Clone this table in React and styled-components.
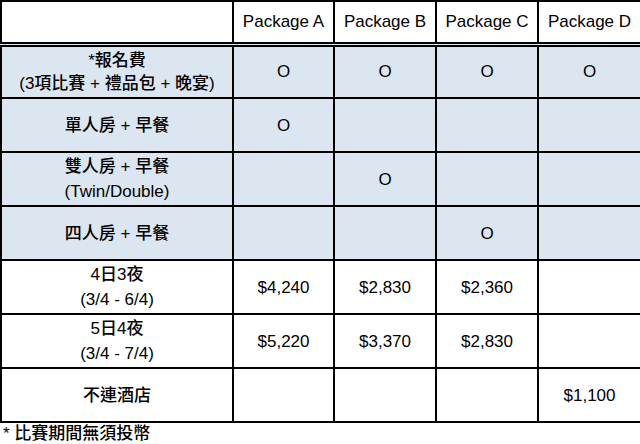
import React from "react";
import styled, { createGlobalStyle } from "styled-components";

const GlobalStyle = createGlobalStyle`
  html, body { margin: 0; padding: 0; background: #fff; }
  body {
    font-family: "Liberation Sans", Arial, "Noto Sans CJK TC", sans-serif;
    color: #000;
  }
`;

const Page = styled.div`
  width: 640px;
  display: flex;
  flex-direction: column;
`;

const PriceTable = styled.table`
  width: 640px;
  table-layout: fixed;
  border-collapse: collapse;
  border: 2px solid #000;
  font-size: 17px;
`;

const HeadRow = styled.tr`
  height: 43px;
`;

const HeadCell = styled.th`
  font-weight: normal;
  padding: 0;
  text-align: center;
  vertical-align: middle;
  background: #fff;
  border: 2px solid #000;
  border-bottom: 5px double #000;
`;

const BodyRow = styled.tr`
  height: 54px;
  background: ${(p) => (p.$shaded ? "#dce6f1" : "#fff")};
`;

const Cell = styled.td`
  padding: 0;
  text-align: center;
  vertical-align: middle;
  border: 2px solid #000;
  line-height: 25px;
`;

const LabelCell = styled(Cell)`
  font-weight: 500;
`;

const Line = styled.div`
  white-space: nowrap;
  line-height: ${(p) => (p.$tight ? "23px" : "25px")};
`;

const Note = styled.div`
  font-size: 17px;
  font-weight: 500;
  line-height: 20px;
  padding: 1px 0 0 3px;
  white-space: nowrap;
`;

const packages = ["Package A", "Package B", "Package C", "Package D"];

const rows = [
  { shaded: true, tight: true, label: ["*報名費", "(3項比賽 + 禮品包 + 晚宴)"], values: ["O", "O", "O", "O"] },
  { shaded: true, label: ["單人房 + 早餐"], values: ["O", "", "", ""] },
  { shaded: true, label: ["雙人房 + 早餐", "(Twin/Double)"], values: ["", "O", "", ""] },
  { shaded: true, label: ["四人房 + 早餐"], values: ["", "", "O", ""] },
  { label: ["4日3夜", "(3/4 - 6/4)"], values: ["$4,240", "$2,830", "$2,360", ""] },
  { label: ["5日4夜", "(3/4 - 7/4)"], values: ["$5,220", "$3,370", "$2,830", ""] },
  { label: ["不連酒店"], values: ["", "", "", "$1,100"] },
];

export default function App() {
  return (
    <Page>
      <GlobalStyle />
      <PriceTable>
        <colgroup>
          <col style={{ width: 232 }} />
          <col style={{ width: 101 }} />
          <col style={{ width: 102 }} />
          <col style={{ width: 102 }} />
          <col style={{ width: 103 }} />
        </colgroup>
        <thead>
          <HeadRow>
            <HeadCell />
            {packages.map((p) => (
              <HeadCell key={p}>{p}</HeadCell>
            ))}
          </HeadRow>
        </thead>
        <tbody>
          {rows.map((r, i) => (
            <BodyRow key={i} $shaded={r.shaded}>
              <LabelCell>
                {r.label.map((l) => (
                  <Line key={l} $tight={r.tight}>{l}</Line>
                ))}
              </LabelCell>
              {r.values.map((v, j) => (
                <Cell key={j}>{v}</Cell>
              ))}
            </BodyRow>
          ))}
        </tbody>
      </PriceTable>
      <Note>* 比賽期間無須投幣</Note>
    </Page>
  );
}
